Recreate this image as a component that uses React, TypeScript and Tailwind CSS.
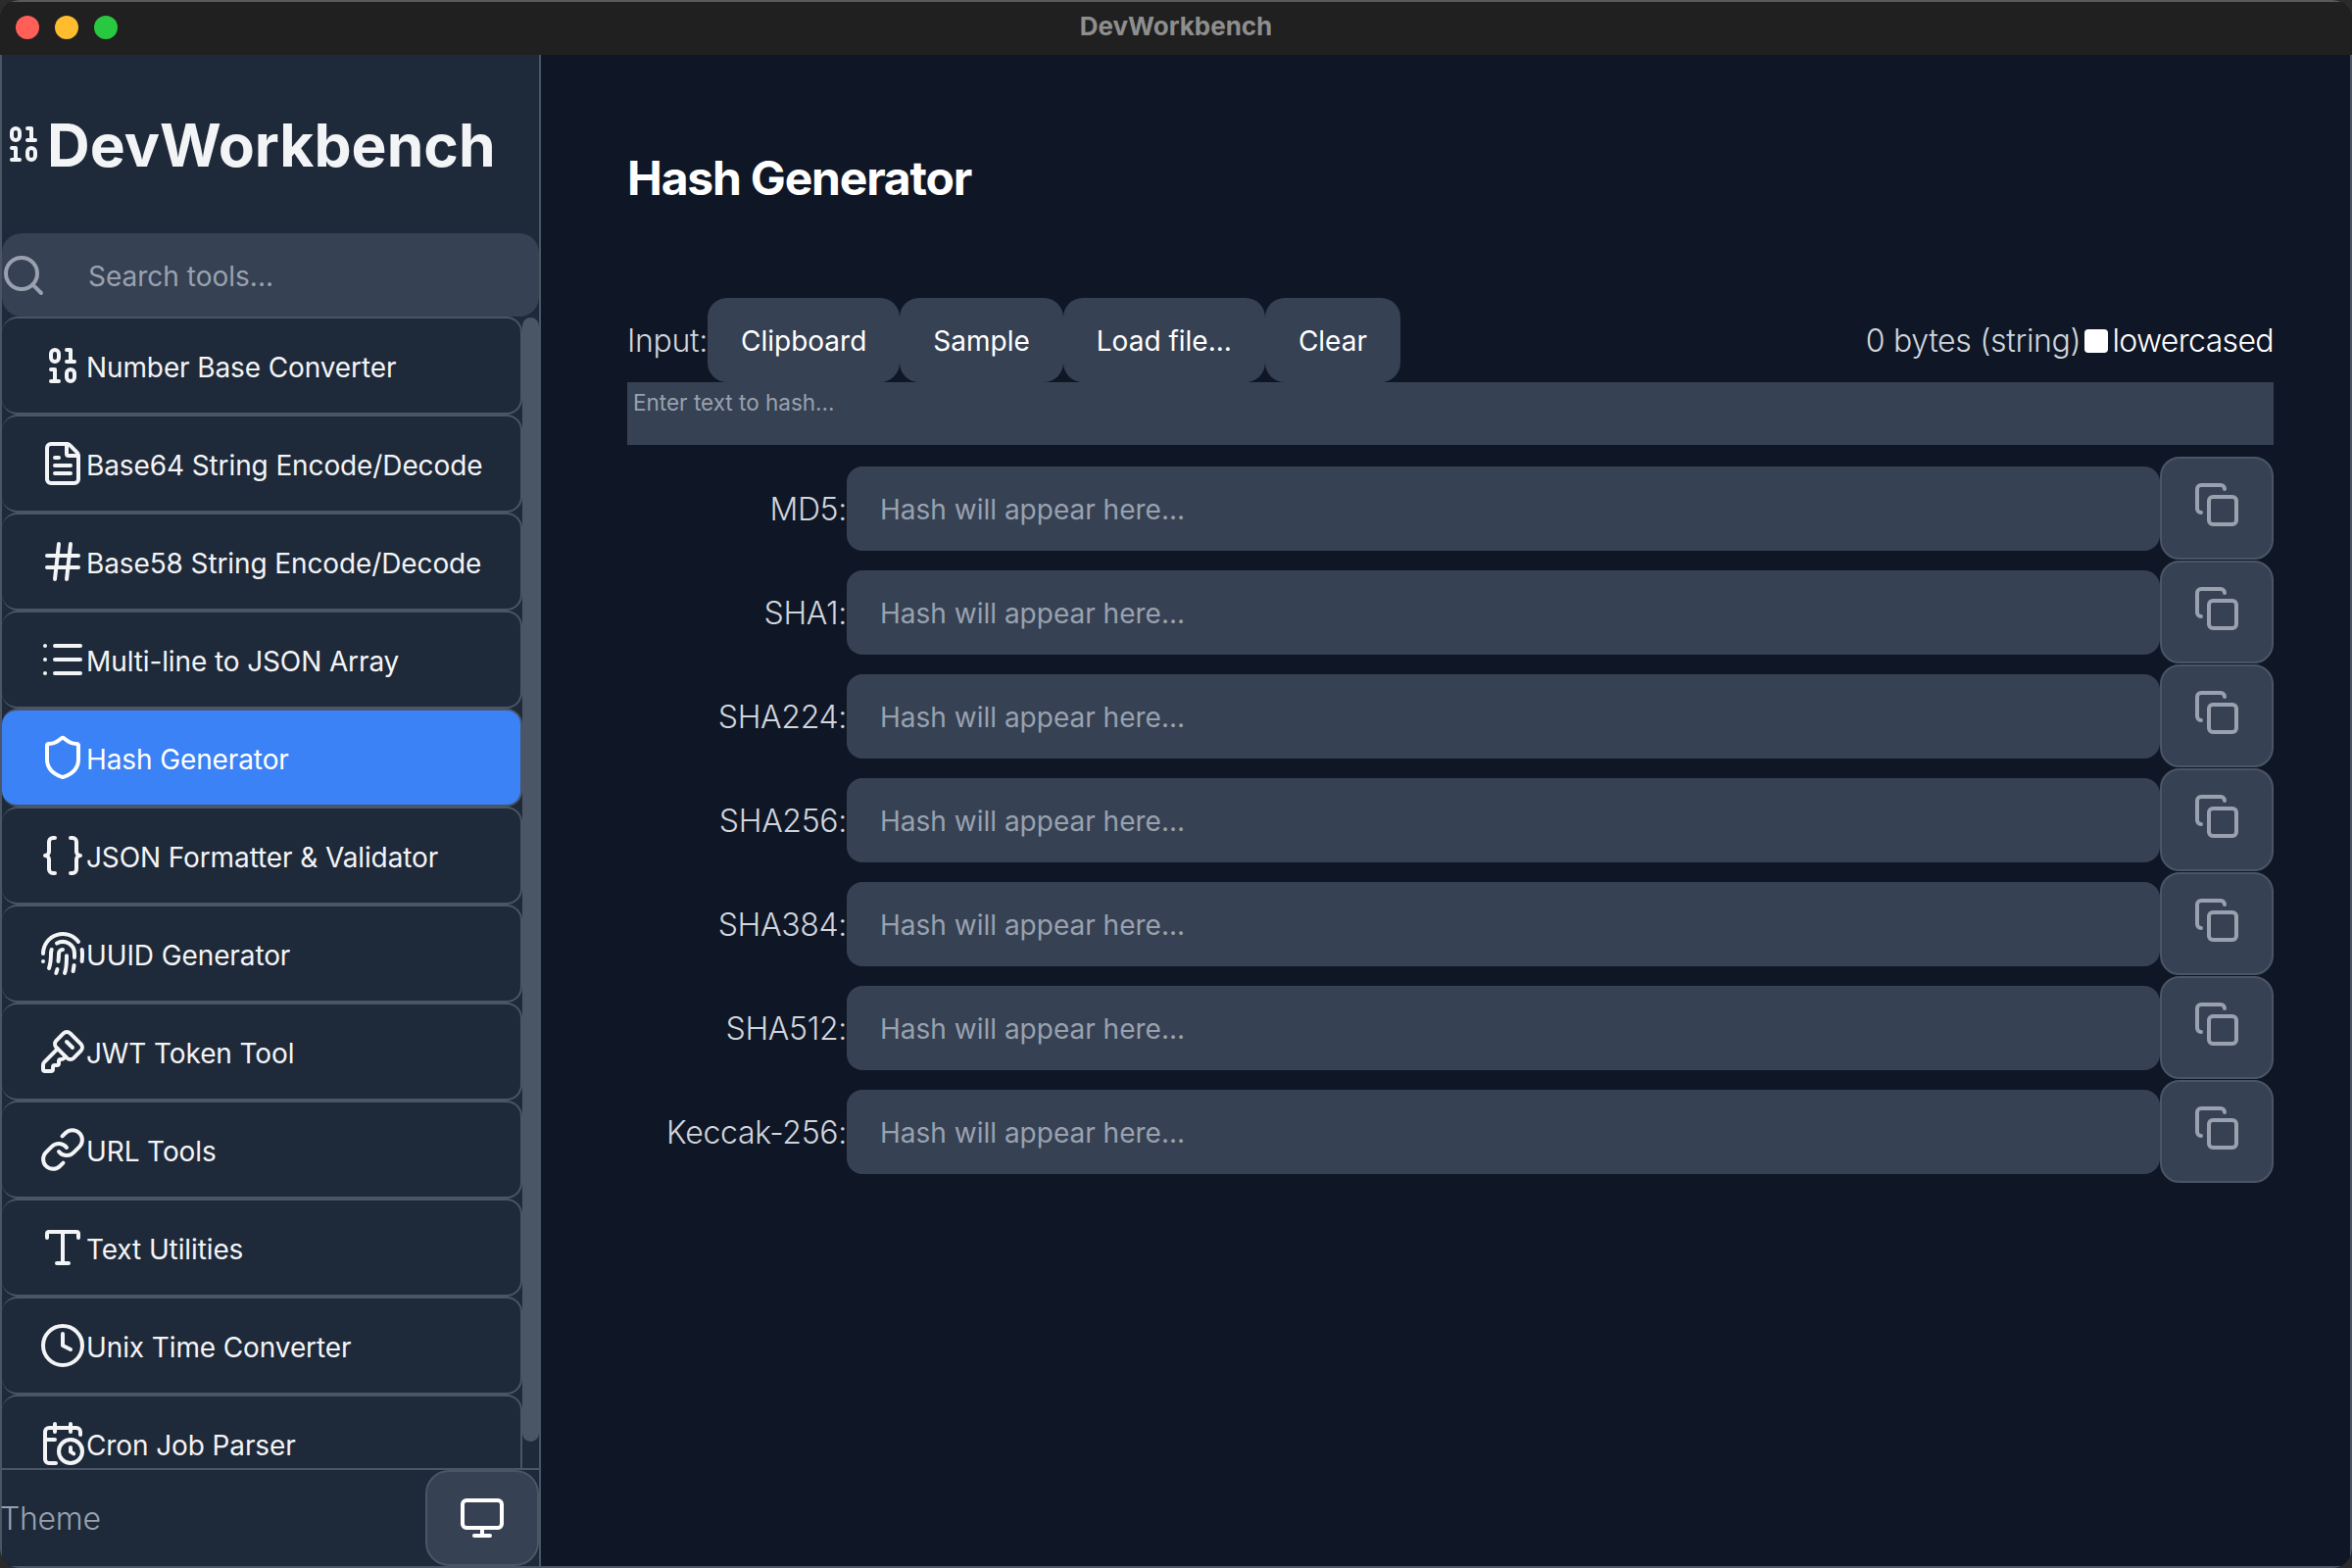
import React from 'react';
import {
  Binary,
  Braces,
  CalendarClock,
  Clock,
  Copy,
  FileText,
  Fingerprint,
  Hash,
  KeySquare,
  Link,
  List,
  Monitor,
  Search,
  Shield,
  Type,
} from 'lucide-react';

const tools = [
  { name: 'Number Base Converter', icon: Binary },
  { name: 'Base64 String Encode/Decode', icon: FileText },
  { name: 'Base58 String Encode/Decode', icon: Hash },
  { name: 'Multi-line to JSON Array', icon: List },
  { name: 'Hash Generator', icon: Shield, active: true },
  { name: 'JSON Formatter & Validator', icon: Braces },
  { name: 'UUID Generator', icon: Fingerprint },
  { name: 'JWT Token Tool', icon: KeySquare },
  { name: 'URL Tools', icon: Link },
  { name: 'Text Utilities', icon: Type },
  { name: 'Unix Time Converter', icon: Clock },
  { name: 'Cron Job Parser', icon: CalendarClock },
];

const hashes = ['MD5', 'SHA1', 'SHA224', 'SHA256', 'SHA384', 'SHA512', 'Keccak-256'];
const inputActions = ['Clipboard', 'Sample', 'Load file...', 'Clear'];

const App: React.FC = () => {
  return (
    <div className="w-[2400px] h-[1600px] bg-[#2b2b2b] overflow-hidden font-['Inter',sans-serif]">
      <div className="w-full h-full flex flex-col rounded-[20px] overflow-hidden bg-[#0f1726]">
        <div className="relative h-[56px] shrink-0 bg-[#202020] shadow-[inset_0_2px_0_#5a5a5a] flex items-center pl-[16px] gap-[16px]">
          <span className="w-[24px] h-[24px] rounded-full bg-[#ff5f57]" />
          <span className="w-[24px] h-[24px] rounded-full bg-[#febc2e]" />
          <span className="w-[24px] h-[24px] rounded-full bg-[#28c840]" />
          <span className="absolute inset-x-0 top-[11px] text-center text-[26px] leading-[32px] font-bold text-[#8e8e8e]">DevWorkbench</span>
        </div>

        <div className="flex-1 flex min-h-0 border-b-2 border-[#4a5565]">
          <aside className="w-[552px] shrink-0 flex flex-col bg-[#1e2939] border-x-2 border-[#4a5565]">
            <div className="h-[182px] shrink-0 flex items-center -ml-[2px]">
              <Binary size={48} className="shrink-0 text-[#f3f4f6]" />
              <h1 className="pt-[3px] text-[60.5px] font-bold text-[#f3f4f6] leading-none">DevWorkbench</h1>
            </div>

            <div className="h-[85px] shrink-0 flex items-center bg-[#364153] rounded-[20px] text-[#99a1af]">
              <Search size={48} className="shrink-0 -ml-[2px]" />
              <span className="ml-[42px] pt-[2px] text-[28px]">Search tools...</span>
            </div>

            <div className="flex-1 flex min-h-0">
              <nav className="flex-1 overflow-hidden">
                {tools.map((tool) => (
                  <button
                    key={tool.name}
                    className={
                      tool.active
                        ? 'w-full h-[100px] flex items-center pl-[38px] pt-[4px] rounded-[16px] bg-[#3b82f6] border-y-2 border-r-2 border-[#4a5565] text-white text-[28px]'
                        : 'w-full h-[100px] flex items-center pl-[38px] pt-[4px] rounded-[16px] border-y-2 border-r-2 border-[#4a5565] text-[#f3f4f6] text-[28px]'
                    }
                  >
                    <tool.icon size={48} className="shrink-0 -mt-[4px]" />
                    <span className="tracking-[-0.004em]">{tool.name}</span>
                  </button>
                ))}
              </nav>
              <div className="w-[17px] shrink-0 pt-[1px]">
                <div className="h-[1147px] bg-[#4a5565] rounded-full" />
              </div>
            </div>

            <div className="h-[100px] shrink-0 flex items-center justify-between border-t-2 border-[#4a5565]">
              <span className="-ml-[2px] pt-[2px] text-[32px] font-light tracking-[-0.01em] text-[#99a1af]">Theme</span>
              <button className="w-[116px] h-[98px] flex items-center justify-center bg-[#364153] border-2 border-[#4a5565] rounded-[24px] text-white">
                <Monitor size={48} />
              </button>
            </div>
          </aside>

          <main className="flex-1 min-w-0 pl-[88px] pr-[78px] border-r-2 border-[#4a5565]">
            <h2 className="mt-[102px] h-[50px] text-[48px] font-bold tracking-tight text-white leading-none">Hash Generator</h2>

            <div className="mt-[96px] flex items-center justify-between">
              <div className="flex items-center">
                <span className="pt-[2px] text-[32px] font-light tracking-[-0.01em] text-[#d1d5dc]">Input:</span>
                {inputActions.map((action) => (
                  <button
                    key={action}
                    className="h-[86px] px-[34px] pt-[2px] rounded-[20px] bg-[#364153] text-white text-[28px]"
                  >
                    {action}
                  </button>
                ))}
              </div>
              <div className="flex items-center pt-[2px] text-[32px] font-light tracking-[-0.01em]">
                <span className="text-[#d1d5dc]">0 bytes (string)</span>
                <span className="w-[24px] h-[24px] mx-[4px] bg-white rounded-[4px]" />
                <span className="text-white tracking-[-0.02em]">lowercased</span>
              </div>
            </div>

            <div className="h-[64px] bg-[#364153] px-[6px] py-[4px] text-[22.5px] text-[#99a1af]">Enter text to hash...</div>

            <div className="mt-[12px]">
              {hashes.map((hash) => (
                <div key={hash} className="h-[106px] flex items-center">
                  <label className="w-[224px] shrink-0 pt-[2px] text-right text-[32px] font-light tracking-[-0.01em] text-[#d1d5dc]">{hash}:</label>
                  <div className="flex-1 h-[86px] flex items-center px-[34px] pt-[2px] bg-[#364153] rounded-[16px] text-[28px] text-[#99a1af]">
                    Hash will appear here...
                  </div>
                  <button className="w-[116px] h-[105px] -mt-[1px] flex items-center justify-center pb-[8px] bg-[#364153] border-2 border-[#4a5565] rounded-[20px] text-[#99a1af]">
                    <Copy size={48} />
                  </button>
                </div>
              ))}
            </div>
          </main>
        </div>
      </div>
    </div>
  );
};

export default App;
